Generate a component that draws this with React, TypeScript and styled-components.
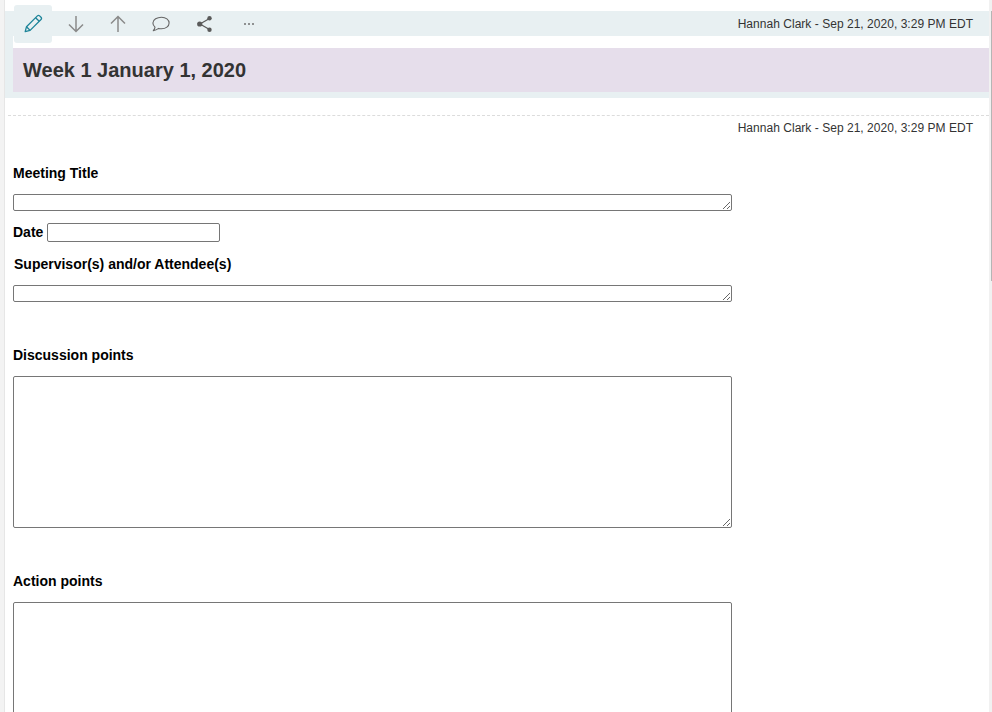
import styled, { createGlobalStyle } from "styled-components";

const GlobalStyle = createGlobalStyle`
  html, body {
    margin: 0;
    height: 712px;
    overflow: hidden;
    background: #fff;
    font-family: "Liberation Sans", Arial, sans-serif;
  }
`;

const META = "Hannah Clark - Sep 21, 2020, 3:29 PM EDT";

const App = () => {
  return (
    <Page>
      <GlobalStyle />
      <Gutter />
      <Main>
        <Panel>
          <Toolbar>
            <IconButton $active $width={38} aria-label="Edit">
              <svg width="20" height="20" viewBox="0 0 20 20" fill="none" stroke="#1d8499" strokeWidth="1.3" strokeLinejoin="round">
                <path d="M2.2 17.6l1.3-4.9L14.4 1.9a1.6 1.6 0 0 1 2.2 0l1.4 1.4a1.6 1.6 0 0 1 0 2.2L7.1 16.4z" />
                <path d="M12.6 3.7l3.6 3.6M3.5 12.7l3.6 3.7" />
              </svg>
            </IconButton>
            <IconButton $width={48} aria-label="Move down">
              <svg width="18" height="18" viewBox="0 0 18 18" fill="none" stroke="#8a8a8a" strokeWidth="1.5">
                <path d="M9 1v15.500M2 9.500L9 16.500l7-7" />
              </svg>
            </IconButton>
            <IconButton $width={36} aria-label="Move up">
              <svg width="18" height="18" viewBox="0 0 18 18" fill="none" stroke="#8a8a8a" strokeWidth="1.5">
                <path d="M9 17V1.800M2 8.500L9 1.500l7 7" />
              </svg>
            </IconButton>
            <IconButton $width={50} aria-label="Comment">
              <svg width="18" height="17" viewBox="0 0 18 17" fill="none" stroke="#666" strokeWidth="1.1" strokeLinejoin="round">
                <path d="M9.500 1.200c4.300 0 7.600 2.400 7.600 5.800s-3.300 5.800-7.600 5.800c-1 0-2-.1-2.900-.4-1.300 1-3.100 2-5.300 2.200.9-.9 1.500-2 1.700-3.500C1.800 10 .9 8.600.9 7c0-3.400 4.300-5.800 8.600-5.800z" />
              </svg>
            </IconButton>
            <IconButton $width={38} aria-label="Share">
              <svg width="18" height="18" viewBox="0 0 18 18" fill="#5a5a5a" stroke="#5a5a5a">
                <path d="M13.500 3.500L4 9l9.500 5.500" fill="none" strokeWidth="1.2" />
                <circle cx="13.500" cy="3.300" r="2.200" stroke="none" />
                <circle cx="3.700" cy="9" r="2.600" stroke="none" />
                <circle cx="13.500" cy="14.700" r="2.200" stroke="none" />
              </svg>
            </IconButton>
            <IconButton $width={50} aria-label="More">
              <svg width="12" height="4" viewBox="0 0 12 4" fill="#707070">
                <circle cx="2" cy="2" r="1" />
                <circle cx="6" cy="2" r="1" />
                <circle cx="10" cy="2" r="1" />
              </svg>
            </IconButton>
            <Meta>{META}</Meta>
          </Toolbar>
          <TitleWrap>
            <Title>Week 1 January 1, 2020</Title>
          </TitleWrap>
        </Panel>
        <Divider />
        <MetaRow>
          <Meta>{META}</Meta>
        </MetaRow>
        <Form>
          <Label $top={28}>Meeting Title</Label>
          <Area $height={17} $top={11} />
          <DateRow>
            <DateLabel>Date</DateLabel>
            <DateInput type="text" />
          </DateRow>
          <Label $top={12} $indent={1}>Supervisor(s) and/or Attendee(s)</Label>
          <Area $height={17} $top={11} />
          <Label $top={43}>Discussion points</Label>
          <Area $height={152} $top={11} />
          <Label $top={43}>Action points</Label>
          <Area $height={152} $top={11} />
        </Form>
      </Main>
      <ScrollTrack>
        <ScrollThumb />
      </ScrollTrack>
    </Page>
  );
};

const Page = styled.div`
  display: flex;
  width: 992px;
  height: 712px;
  overflow: hidden;
`;

const Gutter = styled.div`
  flex: 0 0 4px;
  background: #f3f3f3;
  border-right: 1px solid #e6e6e6;
`;

const Main = styled.div`
  flex: 1;
  min-width: 0;
`;

const Panel = styled.div`
  margin-top: 11px;
  padding-bottom: 6px;
  background: #e8f0f2;
`;

const Toolbar = styled.div`
  display: flex;
  align-items: center;
  height: 25px;
  padding: 0 16px 0 9px;
`;

const IconButton = styled.button<{ $active?: boolean; $width: number }>`
  display: flex;
  align-items: center;
  justify-content: center;
  flex: 0 0 ${(p) => p.$width}px;
  height: 38px;
  margin: -6px 0 -7px;
  padding: 0;
  border: none;
  border-radius: 3px;
  background: ${(p) => (p.$active ? "#e8f0f2" : "transparent")};
`;

const Meta = styled.span`
  margin-left: auto;
  font-size: 12px;
  line-height: 14px;
  letter-spacing: 0.03px;
  color: #333;
`;

const TitleWrap = styled.div`
  margin-left: 8px;
  padding-top: 12px;
  background: #fff;
`;

const Title = styled.h1`
  margin: 0;
  height: 44px;
  padding-left: 10px;
  font-size: 20px;
  line-height: 44px;
  font-weight: bold;
  color: #333;
  background: #e6deeb;
`;

const Divider = styled.div`
  margin: 17px 0 0 3px;
  border-top: 1px dashed #dcdcdc;
`;

const MetaRow = styled.div`
  display: flex;
  padding: 5px 16px 0 0;
`;

const Form = styled.div`
  padding-left: 8px;
`;

const Label = styled.div<{ $top: number; $indent?: number }>`
  margin-top: ${(p) => p.$top}px;
  padding-left: ${(p) => p.$indent ?? 0}px;
  font-size: 14px;
  line-height: 20px;
  font-weight: bold;
  color: #000;
`;

const Area = styled.textarea<{ $height: number; $top: number }>`
  display: block;
  box-sizing: border-box;
  width: 719px;
  height: ${(p) => p.$height}px;
  margin-top: ${(p) => p.$top}px;
  padding: 0;
  border: 1px solid #767676;
  border-radius: 2px;
  background: #fff;
`;

const DateRow = styled.div`
  display: flex;
  align-items: center;
  gap: 4px;
  margin-top: 12px;
`;

const DateLabel = styled.span`
  font-size: 14px;
  line-height: 19px;
  font-weight: bold;
  color: #000;
`;

const DateInput = styled.input`
  box-sizing: border-box;
  width: 173px;
  height: 19px;
  padding: 0;
  border: 1px solid #767676;
  border-radius: 2px;
  background: #fff;
`;

const ScrollTrack = styled.div`
  flex: 0 0 3px;
  background: #f1f1f1;
`;

const ScrollThumb = styled.div`
  width: 1px;
  height: 270px;
  margin: 11px 0 0 2px;
  background: #b5b5b5;
`;

export default App;
